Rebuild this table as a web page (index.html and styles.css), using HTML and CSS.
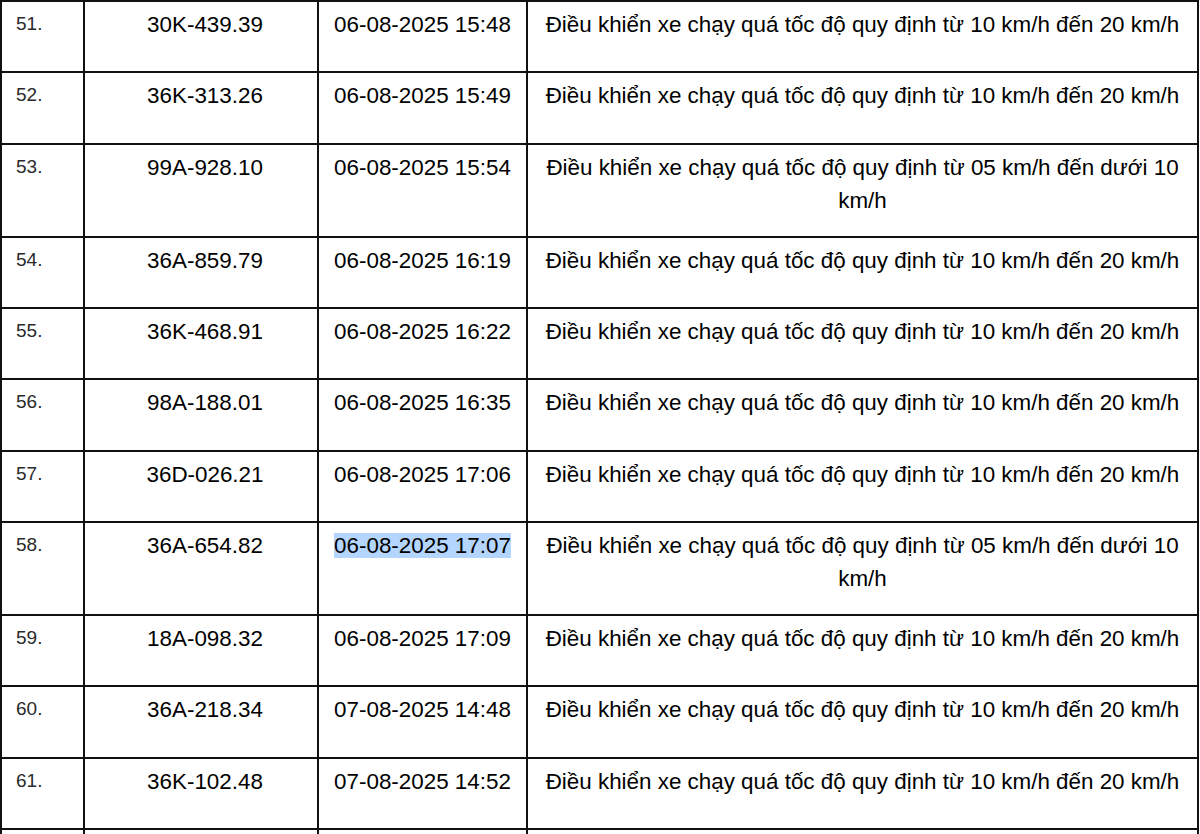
FILE: index.html
```html
<!DOCTYPE html>
<html lang="vi">
<head>
<meta charset="utf-8">
<title>Danh sách vi phạm</title>
<link rel="stylesheet" href="styles.css">
</head>
<body>
<table class="violations">
  <colgroup>
    <col class="c-no">
    <col class="c-plate">
    <col class="c-time">
    <col class="c-desc">
  </colgroup>
  <tbody>
    <tr><td class="no">51.</td><td class="plate">30K-439.39</td><td class="time">06-08-2025 15:48</td><td class="desc">Điều khiển xe chạy quá tốc độ quy định từ 10 km/h đến 20 km/h</td></tr>
    <tr><td class="no">52.</td><td class="plate">36K-313.26</td><td class="time">06-08-2025 15:49</td><td class="desc">Điều khiển xe chạy quá tốc độ quy định từ 10 km/h đến 20 km/h</td></tr>
    <tr><td class="no">53.</td><td class="plate">99A-928.10</td><td class="time">06-08-2025 15:54</td><td class="desc">Điều khiển xe chạy quá tốc độ quy định từ 05 km/h đến dưới 10 km/h</td></tr>
    <tr><td class="no">54.</td><td class="plate">36A-859.79</td><td class="time">06-08-2025 16:19</td><td class="desc">Điều khiển xe chạy quá tốc độ quy định từ 10 km/h đến 20 km/h</td></tr>
    <tr><td class="no">55.</td><td class="plate">36K-468.91</td><td class="time">06-08-2025 16:22</td><td class="desc">Điều khiển xe chạy quá tốc độ quy định từ 10 km/h đến 20 km/h</td></tr>
    <tr><td class="no">56.</td><td class="plate">98A-188.01</td><td class="time">06-08-2025 16:35</td><td class="desc">Điều khiển xe chạy quá tốc độ quy định từ 10 km/h đến 20 km/h</td></tr>
    <tr><td class="no">57.</td><td class="plate">36D-026.21</td><td class="time">06-08-2025 17:06</td><td class="desc">Điều khiển xe chạy quá tốc độ quy định từ 10 km/h đến 20 km/h</td></tr>
    <tr><td class="no">58.</td><td class="plate">36A-654.82</td><td class="time"><span class="selected">06-08-2025 17:07</span></td><td class="desc">Điều khiển xe chạy quá tốc độ quy định từ 05 km/h đến dưới 10 km/h</td></tr>
    <tr><td class="no">59.</td><td class="plate">18A-098.32</td><td class="time">06-08-2025 17:09</td><td class="desc">Điều khiển xe chạy quá tốc độ quy định từ 10 km/h đến 20 km/h</td></tr>
    <tr><td class="no">60.</td><td class="plate">36A-218.34</td><td class="time">07-08-2025 14:48</td><td class="desc">Điều khiển xe chạy quá tốc độ quy định từ 10 km/h đến 20 km/h</td></tr>
    <tr><td class="no">61.</td><td class="plate">36K-102.48</td><td class="time">07-08-2025 14:52</td><td class="desc">Điều khiển xe chạy quá tốc độ quy định từ 10 km/h đến 20 km/h</td></tr>
    <tr><td class="no"></td><td class="plate"></td><td class="time"></td><td class="desc"></td></tr>
  </tbody>
</table>
</body>
</html>
```
FILE: styles.css
```css
html, body {
  margin: 0;
  padding: 0;
  background: #ffffff;
  overflow: hidden;
}

.violations {
  border-collapse: collapse;
  table-layout: fixed;
  width: 1197px;
  margin: 0;
  font-family: "Liberation Sans", Arial, "Helvetica", sans-serif;
  color: #000;
}

.c-no { width: 83px; }
.c-plate { width: 234px; }
.c-time { width: 209px; }
.c-desc { width: 671px; }

.violations td {
  border: 2px solid #111;
  vertical-align: top;
  height: 71.33px;
  box-sizing: border-box;
  padding: 6px 8px 19px;
  font-size: 22.4px;
  line-height: 33px;
  text-align: center;
}

.violations td.no {
  text-align: left;
  padding-left: 14px;
  padding-top: 5px;
  font-size: 19px;
  color: #2a2a2a;
}

.violations td.plate {
  padding-left: 16px;
  padding-right: 8px;
}

.selected {
  background: #b4d5fe;
}
```
